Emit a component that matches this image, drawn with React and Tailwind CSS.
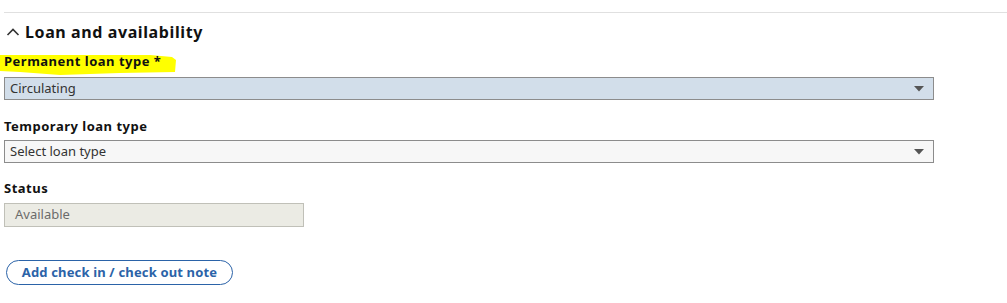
import React from 'react';

const Caret = () => (
  <svg width="10" height="6" viewBox="0 0 10 6" className="shrink-0">
    <path d="M0 0 H10 L5 5.5 Z" fill="#555" />
  </svg>
);

const SelectBox = ({ value, bg }) => (
  <div
    className={`flex h-[23px] w-[930px] items-center justify-between border border-[#8c8c8c] pl-[5px] pr-[9px] text-[13px] text-[#333] ${bg}`}
  >
    <span>{value}</span>
    <Caret />
  </div>
);

const labelCls = 'h-[20px] text-[13px] font-bold leading-[20px] tracking-[0.5px] text-[#111]';

const App = () => {
  return (
    <div className="h-[303px] w-[1007px] bg-white font-['Noto_Sans',sans-serif] text-[#222]">
      <div className="pl-[4px] pt-[12px]">
        <div className="border-t border-[#e0e0e0]" />
      </div>

      <div className="pl-[4px]">
        <div className="mt-[9px] flex h-[20px] items-center gap-[5px]">
          <svg width="14" height="10" viewBox="0 0 14 10" className="ml-[2px]">
            <path d="M1.5 8 L7 2.5 L12.5 8" fill="none" stroke="#333" strokeWidth="1.6" />
          </svg>
          <span className="text-[16px] font-bold leading-[20px] tracking-[0.6px] text-[#111]">Loan and availability</span>
        </div>

        <div className="relative mt-[9px] w-[176px]">
          <svg
            width="180"
            height="26"
            viewBox="0 0 180 26"
            className="absolute left-[-4px] top-0"
          >
            <path d="M0 4 L150 4 L172 6 L176 9 L175 21 L120 22 L60 24 L20 21 L0 20 Z" fill="#ffff00" />
          </svg>
          <div className={`relative ${labelCls}`}>Permanent loan type *</div>
        </div>

        <div className="mt-[6px]">
          <SelectBox value="Circulating" bg="bg-[#d2deea]" />
        </div>

        <div className={`mt-[16px] ${labelCls}`}>Temporary loan type</div>
        <div className="mt-[4px]">
          <SelectBox value="Select loan type" bg="bg-[#f7f7f7]" />
        </div>

        <div className={`mt-[15px] ${labelCls}`}>Status</div>
        <div className="mt-[5px] flex h-[24px] w-[300px] items-center border border-[#c0c0b8] bg-[#ebebe4] pl-[10px] text-[13px] text-[#6b6b6b]">
          Available
        </div>

        <button className="ml-[2px] mt-[33px] flex h-[25px] w-[227px] items-center justify-center rounded-full border border-[#2b63a8] bg-white text-[13px] font-bold tracking-[0.15px] text-[#2b63a8]">
          Add check in / check out note
        </button>
      </div>
    </div>
  );
};

export default App;
